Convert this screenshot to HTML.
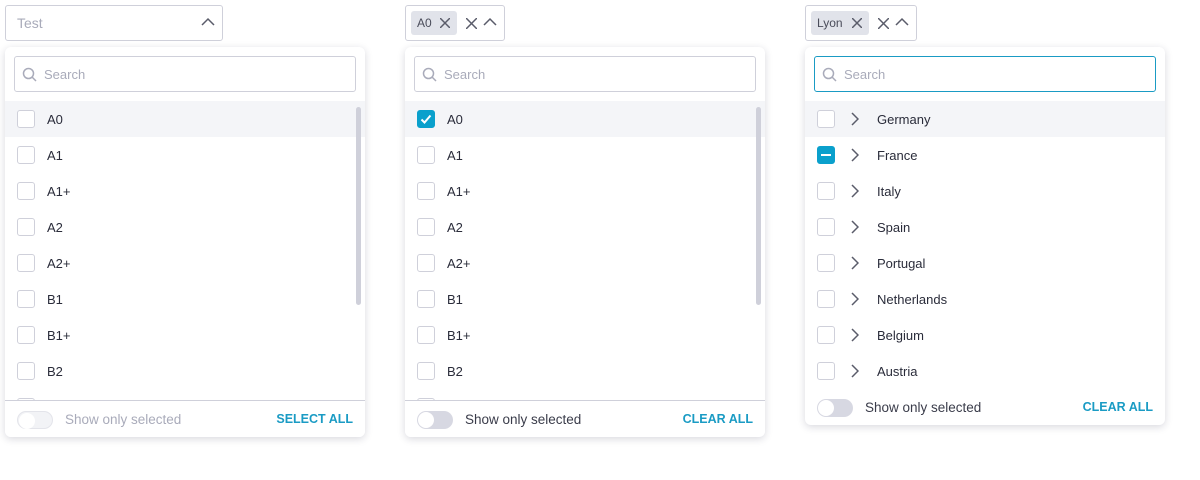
<!DOCTYPE html>
<html><head><style>
*{box-sizing:border-box;margin:0;padding:0}
body{width:1200px;height:480px;background:#fff;font-family:"Liberation Sans",sans-serif;position:relative;overflow:hidden;color:#2a2c3a}
.trig{position:absolute;top:5px;height:36px;border:1px solid #cfd0da;border-radius:3px;background:#fff}
.chip{position:absolute;top:5px;height:24px;background:#e1e3ea;border-radius:3px;font-size:12px;color:#4a4c5a;line-height:24px;padding-left:6px}
.panel{position:absolute;top:47px;width:360px;background:#fff;border-radius:6px;box-shadow:0 2px 8px rgba(40,40,70,.18);overflow:hidden}
.search{position:absolute;left:9px;top:9px;width:342px;height:36px;border:1px solid #cfd0da;border-radius:3px;font-size:13px;color:#a9abba;line-height:35px;padding-left:29px}
.search svg{position:absolute;left:7px;top:10px}
.row{position:absolute;left:0;width:360px;height:36px;font-size:13px;line-height:37px}
.row.hl{background:#f4f5f8}
.cb{position:absolute;left:12px;top:9px;width:18px;height:18px;border:1px solid #cfd0da;border-radius:3px;background:#fff}
.cb.on{background:#0aa0cc;border-color:#0aa0cc}
.row .t{position:absolute;left:42px}
.row .chev{position:absolute;left:46px;top:11px}
.foot{position:absolute;left:0;width:360px;height:36px;font-size:13.5px;line-height:37px}
.tog{position:absolute;left:12px;top:10px;width:36px;height:18px;border-radius:9px;background:#d7d8e2}
.tog:after{content:"";position:absolute;left:1px;top:1px;width:16px;height:16px;border-radius:50%;background:#fff}
.foot .l{position:absolute;left:60px;color:#3a3c4a}
.foot .r{position:absolute;right:12px;color:#1a9bc4;font-weight:bold;font-size:12.5px;letter-spacing:0}
.sb{position:absolute;left:351px;top:60px;width:5px;height:198px;border-radius:3px;background:#cfd0da}
</style></head><body>

<div class="trig" style="left:5px;width:218px"><span style="position:absolute;left:11px;top:9px;font-size:14px;color:#a9abba">Test</span>
<svg style="position:absolute;left:195px;top:11px" width="14" height="10"><path d="M1 8L7 2L13 8" fill="none" stroke="#5a5c6a" stroke-width="1.5"/></svg></div>

<div class="trig" style="left:405px;width:100px"></div>
<div class="chip" style="left:411px;top:11px;width:46px">A0<svg style="position:absolute;left:29px;top:7px" width="10" height="10"><path d="M0 0L10 10M10 0L0 10" stroke="#5a5c6a" stroke-width="1.5"/></svg></div>
<svg style="position:absolute;left:466px;top:18px" width="11" height="11"><path d="M0 0L11 11M11 0L0 11" stroke="#5a5c6a" stroke-width="1.5"/></svg>
<svg style="position:absolute;left:483px;top:17px" width="14" height="10"><path d="M1 8L7 2L13 8" fill="none" stroke="#5a5c6a" stroke-width="1.5"/></svg>

<div class="trig" style="left:805px;width:112px"></div>
<div class="chip" style="left:811px;top:11px;width:58px">Lyon<svg style="position:absolute;left:41px;top:7px" width="10" height="10"><path d="M0 0L10 10M10 0L0 10" stroke="#5a5c6a" stroke-width="1.5"/></svg></div>
<svg style="position:absolute;left:878px;top:18px" width="11" height="11"><path d="M0 0L11 11M11 0L0 11" stroke="#5a5c6a" stroke-width="1.5"/></svg>
<svg style="position:absolute;left:895px;top:17px" width="14" height="10"><path d="M1 8L7 2L13 8" fill="none" stroke="#5a5c6a" stroke-width="1.5"/></svg>

<!-- panel 1 -->
<div class="panel" style="left:5px;height:390px">
<div class="search"><svg width="16" height="16"><circle cx="6.5" cy="6.5" r="5" fill="none" stroke="#a9abba" stroke-width="1.5"/><path d="M10 10L14 14" stroke="#a9abba" stroke-width="1.5"/></svg>Search</div>
<div class="row hl" style="top:54px"><div class="cb"></div><span class="t">A0</span></div>
<div class="row" style="top:90px"><div class="cb"></div><span class="t">A1</span></div>
<div class="row" style="top:126px"><div class="cb"></div><span class="t">A1+</span></div>
<div class="row" style="top:162px"><div class="cb"></div><span class="t">A2</span></div>
<div class="row" style="top:198px"><div class="cb"></div><span class="t">A2+</span></div>
<div class="row" style="top:234px"><div class="cb"></div><span class="t">B1</span></div>
<div class="row" style="top:270px"><div class="cb"></div><span class="t">B1+</span></div>
<div class="row" style="top:306px"><div class="cb"></div><span class="t">B2</span></div>
<div class="row" style="top:342px"><div class="cb"></div></div>
<div class="sb"></div>
<div class="foot" style="top:353px;height:37px;background:#fff;border-top:1px solid #cfd0da"><div class="tog" style="background:#f2f3f6;border:1px solid #e3e4ea"></div><span class="l" style="color:#a9abba">Show only selected</span><span class="r">SELECT ALL</span></div>
</div>

<!-- panel 2 -->
<div class="panel" style="left:405px;height:390px">
<div class="search"><svg width="16" height="16"><circle cx="6.5" cy="6.5" r="5" fill="none" stroke="#a9abba" stroke-width="1.5"/><path d="M10 10L14 14" stroke="#a9abba" stroke-width="1.5"/></svg>Search</div>
<div class="row hl" style="top:54px"><div class="cb on"><svg width="16" height="16" style="position:absolute;left:0;top:0"><path d="M3.5 8.5L6.5 11.5L12.5 4.5" fill="none" stroke="#fff" stroke-width="2"/></svg></div><span class="t">A0</span></div>
<div class="row" style="top:90px"><div class="cb"></div><span class="t">A1</span></div>
<div class="row" style="top:126px"><div class="cb"></div><span class="t">A1+</span></div>
<div class="row" style="top:162px"><div class="cb"></div><span class="t">A2</span></div>
<div class="row" style="top:198px"><div class="cb"></div><span class="t">A2+</span></div>
<div class="row" style="top:234px"><div class="cb"></div><span class="t">B1</span></div>
<div class="row" style="top:270px"><div class="cb"></div><span class="t">B1+</span></div>
<div class="row" style="top:306px"><div class="cb"></div><span class="t">B2</span></div>
<div class="row" style="top:342px"><div class="cb"></div></div>
<div class="sb"></div>
<div class="foot" style="top:353px;height:37px;background:#fff;border-top:1px solid #cfd0da"><div class="tog"></div><span class="l">Show only selected</span><span class="r">CLEAR ALL</span></div>
</div>

<!-- panel 3 -->
<div class="panel" style="left:805px;height:378px">
<div class="search" style="border-color:#1a9bc4"><svg width="16" height="16"><circle cx="6.5" cy="6.5" r="5" fill="none" stroke="#a9abba" stroke-width="1.5"/><path d="M10 10L14 14" stroke="#a9abba" stroke-width="1.5"/></svg>Search</div>
<div class="row hl" style="top:54px"><div class="cb"></div><svg class="chev" width="8" height="14"><path d="M1 1L7 7L1 13" fill="none" stroke="#5a5c6a" stroke-width="1.5"/></svg><span class="t" style="left:72px">Germany</span></div>
<div class="row" style="top:90px"><div class="cb on"><div style="position:absolute;left:3px;top:7px;width:10px;height:2px;background:#fff"></div></div><svg class="chev" width="8" height="14"><path d="M1 1L7 7L1 13" fill="none" stroke="#5a5c6a" stroke-width="1.5"/></svg><span class="t" style="left:72px">France</span></div>
<div class="row" style="top:126px"><div class="cb"></div><svg class="chev" width="8" height="14"><path d="M1 1L7 7L1 13" fill="none" stroke="#5a5c6a" stroke-width="1.5"/></svg><span class="t" style="left:72px">Italy</span></div>
<div class="row" style="top:162px"><div class="cb"></div><svg class="chev" width="8" height="14"><path d="M1 1L7 7L1 13" fill="none" stroke="#5a5c6a" stroke-width="1.5"/></svg><span class="t" style="left:72px">Spain</span></div>
<div class="row" style="top:198px"><div class="cb"></div><svg class="chev" width="8" height="14"><path d="M1 1L7 7L1 13" fill="none" stroke="#5a5c6a" stroke-width="1.5"/></svg><span class="t" style="left:72px">Portugal</span></div>
<div class="row" style="top:234px"><div class="cb"></div><svg class="chev" width="8" height="14"><path d="M1 1L7 7L1 13" fill="none" stroke="#5a5c6a" stroke-width="1.5"/></svg><span class="t" style="left:72px">Netherlands</span></div>
<div class="row" style="top:270px"><div class="cb"></div><svg class="chev" width="8" height="14"><path d="M1 1L7 7L1 13" fill="none" stroke="#5a5c6a" stroke-width="1.5"/></svg><span class="t" style="left:72px">Belgium</span></div>
<div class="row" style="top:306px"><div class="cb"></div><svg class="chev" width="8" height="14"><path d="M1 1L7 7L1 13" fill="none" stroke="#5a5c6a" stroke-width="1.5"/></svg><span class="t" style="left:72px">Austria</span></div>
<div class="foot" style="top:342px"><div class="tog"></div><span class="l">Show only selected</span><span class="r">CLEAR ALL</span></div>
</div>
</body></html>
